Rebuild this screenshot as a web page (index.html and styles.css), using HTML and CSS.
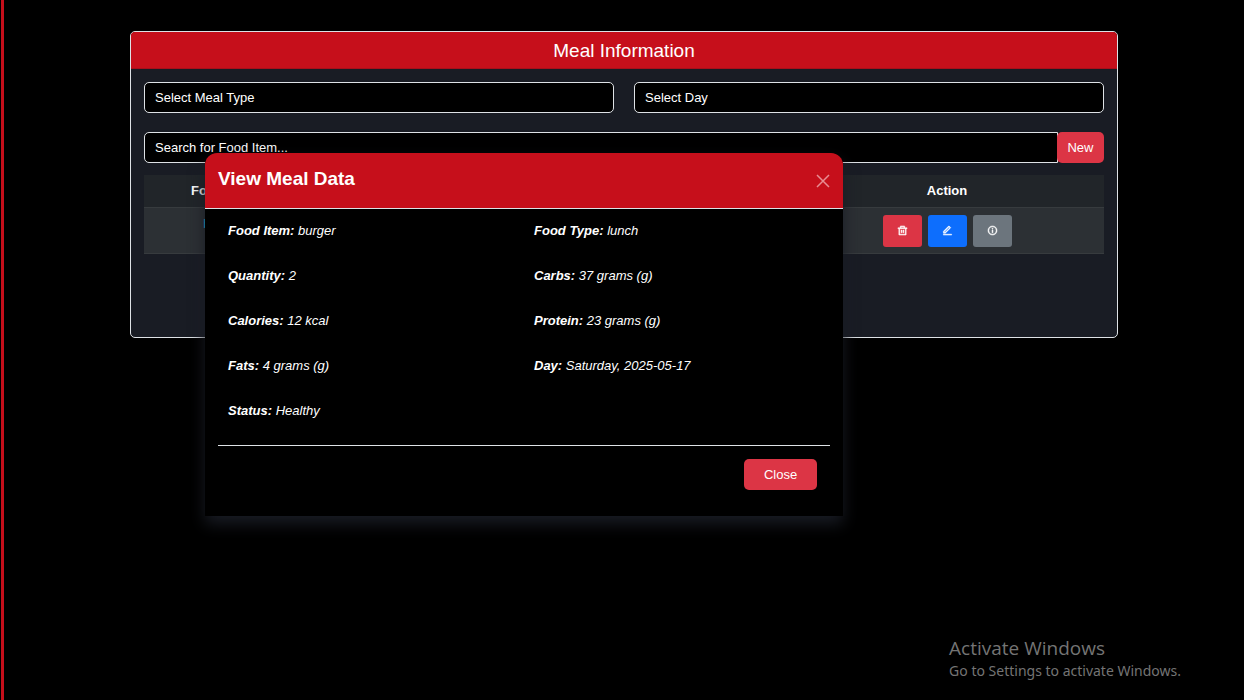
FILE: index.html
```html
<!DOCTYPE html>
<html lang="en">
<head>
<meta charset="utf-8">
<meta name="viewport" content="width=device-width, initial-scale=1">
<title>Meal Information</title>
<link rel="stylesheet" href="styles.css">
</head>
<body class="page">
<main class="content">
  <section class="card">
    <h1 class="card-title">Meal Information</h1>
    <div class="card-body">
      <div class="filters">
        <select class="field" aria-label="Meal type"><option>Select Meal Type</option></select>
        <select class="field" aria-label="Day"><option>Select Day</option></select>
      </div>
      <div class="search">
        <input class="field search-field" type="text" aria-label="Search for food item" placeholder="Search for Food Item...">
        <button class="btn btn-new" type="button">New</button>
      </div>
      <table class="meals">
        <colgroup><col class="col-food"><col class="col-detail"><col class="col-action"></colgroup>
        <thead>
          <tr><th scope="col">Food Item</th><td></td><th scope="col">Action</th></tr>
        </thead>
        <tbody>
          <tr>
            <td><a class="food-link" href="#meal">burger</a></td>
            <td></td>
            <td>
              <div class="actions">
                <button class="icon-btn delete" type="button" aria-label="Delete">
                  <svg class="icon" viewBox="0 0 24 24"><path fill-rule="evenodd" d="M17 6h5v2h-2v13a1 1 0 0 1-1 1H5a1 1 0 0 1-1-1V8H2V6h5V3a1 1 0 0 1 1-1h8a1 1 0 0 1 1 1zm1 2H6v12h12zM9 11h2v6H9zm4 0h2v6h-2zM9 4v2h6V4z"/></svg>
                </button>
                <button class="icon-btn edit" type="button" aria-label="Edit">
                  <svg class="icon" viewBox="0 0 24 24"><path fill-rule="evenodd" d="M6.4 16 16.6 5.800 15.200 4.400 5 14.600V16zm.8 2H3v-4.200L14.400 2.300a1 1 0 0 1 1.400 0l2.900 2.900a1 1 0 0 1 0 1.400zM3 20h18v2H3z"/></svg>
                </button>
                <button class="icon-btn info" type="button" aria-label="View details">
                  <svg class="icon" viewBox="0 0 24 24"><path fill-rule="evenodd" d="M12 22a10 10 0 1 1 0-20 10 10 0 0 1 0 20zm0-2a8 8 0 1 0 0-16 8 8 0 0 0 0 16zM11 7h2v2h-2zm0 4h2v6h-2z"/></svg>
                </button>
              </div>
            </td>
          </tr>
        </tbody>
      </table>
    </div>
  </section>
</main>

<div class="modal" id="meal" role="dialog" aria-labelledby="modal-title">
  <header class="modal-header">
    <h2 class="modal-title" id="modal-title">View Meal Data</h2>
    <button class="dismiss" type="button" aria-label="Dismiss">
      <svg class="dismiss-icon" viewBox="0 0 14 14"><path d="M1 1 13 13M13 1 1 13"/></svg>
    </button>
  </header>
  <div class="modal-body">
    <div class="details">
      <p class="detail"><strong>Food Item:</strong> burger</p>
      <p class="detail"><strong>Food Type:</strong> lunch</p>
      <p class="detail"><strong>Quantity:</strong> 2</p>
      <p class="detail"><strong>Carbs:</strong> 37 grams (g)</p>
      <p class="detail"><strong>Calories:</strong> 12 kcal</p>
      <p class="detail"><strong>Protein:</strong> 23 grams (g)</p>
      <p class="detail"><strong>Fats:</strong> 4 grams (g)</p>
      <p class="detail"><strong>Day:</strong> Saturday, 2025-05-17</p>
      <p class="detail"><strong>Status:</strong> Healthy</p>
    </div>
    <footer class="modal-footer"><button class="btn btn-close" type="button">Close</button></footer>
  </div>
</div>

<aside class="activation">
  <p class="activation-title">Activate Windows</p>
  <p class="activation-text">Go to Settings to activate Windows.</p>
</aside>
</body>
</html>
```

FILE: styles.css
```css
*, *::before, *::after { box-sizing: border-box; }

.page {
  margin: 0 0 0 1px;
  min-height: 100vh;
  border-left: 3px solid #c60f1b;
  background: #000;
  color: #fff;
  font: 13px/20px "Liberation Sans", Arial, sans-serif;
}

.content { padding: 31px 126px; }

.card {
  min-height: 307px;
  border: 1px solid #dee2e6;
  border-radius: 5px;
  background: #191c24;
  overflow: hidden;
}

.card-title {
  margin: 0;
  padding: 7px 13px 5px;
  border-bottom: 1px solid #a80f1b;
  background: #c60f1b;
  font-size: 19px;
  font-weight: 400;
  line-height: 24px;
  text-align: center;
}

.card-body { padding: 13px; }

.filters {
  display: grid;
  grid-template-columns: 1fr 1fr;
  gap: 20px;
  margin-bottom: 19px;
}

.field {
  width: 100%;
  height: 31px;
  margin: 0;
  padding: 0 10px;
  border: 1px solid #dee2e6;
  border-radius: 5px;
  background: #000;
  color: #fff;
  font: inherit;
  appearance: none;
}
.field::placeholder { color: #fff; opacity: 1; }

.search { display: flex; margin-bottom: 12px; }
.search-field { flex: 1; border-radius: 5px 0 0 5px; }

.btn {
  height: 31px;
  border: 0;
  border-radius: 5px;
  background: #dc3545;
  color: #fff;
  font: inherit;
}
.btn-new { width: 47px; margin-left: -1px; padding: 0; }
.btn-close { width: 73px; }

.meals {
  width: 100%;
  border-collapse: collapse;
  table-layout: fixed;
  text-align: center;
}
.col-food { width: 156px; }
.col-action { width: 314px; }
.meals th, .meals td { padding: 6px; border-bottom: 1px solid #373b3e; vertical-align: top; }
.meals thead { background: #212529; }
.meals tbody { background: #2c3034; }
.food-link { color: #0dcaf0; text-decoration: none; }

.actions { display: flex; justify-content: center; gap: 6px; }
.icon-btn {
  display: flex;
  align-items: center;
  justify-content: center;
  width: 39px;
  height: 32px;
  margin-top: 1px;
  padding: 0 0 1px;
  border: 0;
  border-radius: 3px;
}
.delete { background: #dc3545; }
.edit { background: #0d6efd; }
.info { background: #6c757d; }
.icon { width: 11px; height: 11px; fill: #fff; stroke: #fff; stroke-width: 1; }

.modal {
  position: absolute;
  top: 153px;
  left: 205px;
  width: 638px;
  border-radius: 12px 12px 0 0;
  background: #000;
  box-shadow: 0 8px 16px #191c24;
}
.modal-header {
  display: flex;
  align-items: center;
  justify-content: space-between;
  height: 56px;
  padding: 0 13px;
  border-bottom: 1px solid #dee2e6;
  border-radius: 12px 12px 0 0;
  background: #c60f1b;
}
.modal-title { margin: 0; padding-bottom: 3px; font-size: 19px; line-height: 24px; }
.dismiss { display: flex; padding: 0; border: 0; background: none; }
.dismiss-icon { width: 14px; height: 14px; fill: none; stroke: #e88d93; stroke-width: 1.5; }

.modal-body { padding: 12px 13px 13px; }
.details {
  display: grid;
  grid-template-columns: 1fr 1fr;
  row-gap: 25px;
  padding: 0 0 24px;
}
.detail { margin: 0; padding: 0 10px; font-style: italic; }
.modal-footer {
  display: flex;
  justify-content: flex-end;
  padding: 13px;
  border-top: 1px solid #dee2e6;
}

.activation {
  position: absolute;
  right: 63px;
  bottom: 19px;
  color: #747474;
  font-family: "Open Sans", "Noto Sans", sans-serif;
}
.activation-title { margin: 0; font-size: 19px; line-height: 26px; }
.activation-text { margin: 0; font-family: "Noto Sans", sans-serif; font-size: 14px; line-height: 20px; }
```
